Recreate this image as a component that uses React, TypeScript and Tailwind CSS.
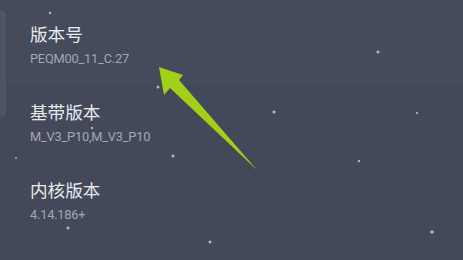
import React from "react";

const stars: [number, number, number][] = [
  [50, 13, 1.2],
  [158, 87, 1.5],
  [92, 128, 1.2],
  [16, 158, 1],
  [173, 156, 1.5],
  [68, 228, 1.5],
  [210, 242, 1.5],
  [274, 112, 1.6],
  [378, 52, 1.5],
  [417, 113, 1.1],
  [359, 161, 1.2],
  [432, 232, 1.8],
];

const rows = [
  { title: "版本号", sub: "PEQM00_11_C.27" },
  { title: "基带版本", sub: "M_V3_P10,M_V3_P10" },
  { title: "内核版本", sub: "4.14.186+" },
];

export default function App() {
  return (
    <div className="relative w-[463px] h-[260px] overflow-hidden bg-[#434959]">
      <div className="absolute left-0 top-0 w-full h-[84px] bg-[#454b5b]" />
      <div className="absolute left-0 top-[10px] w-[6px] h-[107px] rounded-r-[5px] bg-[#4e5465]" />
      <div className="relative flex flex-col pl-[30px] pt-[22px] gap-[33px]">
        {rows.map((r) => (
          <div key={r.title} className="flex flex-col">
            <div
              className="text-[17.6px] leading-[24px] text-[#e8eaee]"
              style={{ fontFamily: '"Noto Sans CJK SC", sans-serif' }}
            >
              {r.title}
            </div>
            <div
              className="mt-[5px] text-[12.8px] leading-[16px] text-[#a3a7b1] tracking-[-0.2px]"
              style={{ fontFamily: 'Roboto, "Noto Sans", sans-serif' }}
            >
              {r.sub}
            </div>
          </div>
        ))}
      </div>
      <svg className="absolute left-0 top-0" width="463" height="260" viewBox="0 0 463 260">
        {stars.map(([x, y, r], i) => (
          <circle key={i} cx={x} cy={y} r={r} fill="#c9ccd6" opacity="0.85" />
        ))}
        <polygon
          points="159,67 183,75 179,80 257,170 170,88 164,95"
          fill="#a2d016"
        />
      </svg>
    </div>
  );
}
